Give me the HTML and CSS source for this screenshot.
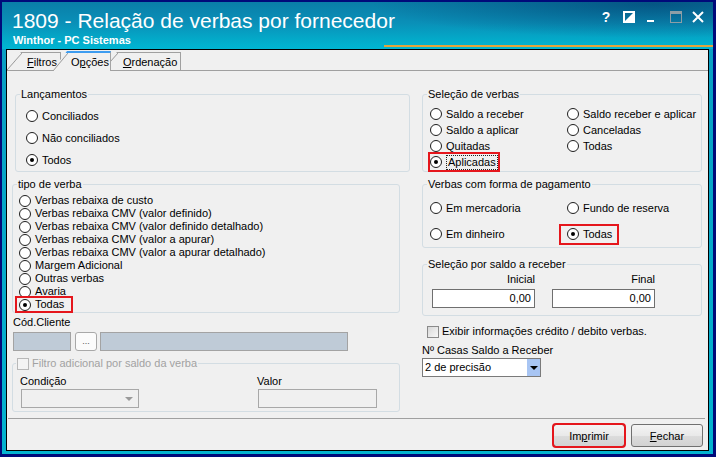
FILE: index.html
```html
<!DOCTYPE html>
<html lang="pt-BR">
<head>
    <meta charset="UTF-8">
    <title>1809 - Relação de verbas por fornecedor</title>
    <link rel="stylesheet" href="styles.css">
</head>
<body>
    <div class="window">
        <div class="titlebar">
            <div class="title-row">
                <div class="title">1809 - Relação de verbas por fornecedor</div>
                <div class="controls">
                    <span class="ctl ctl-help">?</span>
                    <svg class="ctl ctl-restore" width="12" height="12" viewBox="0 0 12 12">
                        <path d="M1 1h10v10H1z" fill="none" stroke="#fff" stroke-width="2"/>
                        <path d="M11 1v10H1z" fill="#fff"/>
                    </svg>
                    <svg class="ctl ctl-min" width="12" height="12" viewBox="0 0 12 12">
                        <rect x="2" y="9" width="7" height="2" fill="#fff"/>
                    </svg>
                    <svg class="ctl ctl-max" width="12" height="12" viewBox="0 0 12 12">
                        <rect x="0.5" y="0.5" width="11" height="11" fill="none" stroke="#8d9ea6"/>
                        <rect x="0" y="0" width="12" height="3" fill="#8d9ea6"/>
                    </svg>
                    <svg class="ctl ctl-close" width="12" height="12" viewBox="0 0 12 12">
                        <path d="M1 1L11 11M11 1L1 11" stroke="#fff" stroke-width="2"/>
                    </svg>
                </div>
            </div>
            <div class="subtitle">Winthor - PC Sistemas</div>
        </div>

        <div class="client">
            <div class="tabs">
                <div class="tab"><u>F</u>iltros</div>
                <div class="tab active">O<u>p</u>ções</div>
                <div class="tab"><u>O</u>rdenação</div>
            </div>

            <div class="page">
                <div class="col col-left">
                    <fieldset class="grp grp-lanc">
                        <legend>Lançamentos</legend>
                        <div class="grp-body">
                            <div class="opt"><span class="radio"></span>Conciliados</div>
                            <div class="opt"><span class="radio"></span>Não conciliados</div>
                            <div class="opt"><span class="radio on"></span>Todos</div>
                        </div>
                    </fieldset>

                    <fieldset class="grp grp-tipo">
                        <legend>tipo de verba</legend>
                        <div class="grp-body">
                            <div class="opt"><span class="radio"></span>Verbas rebaixa de custo</div>
                            <div class="opt"><span class="radio"></span>Verbas rebaixa CMV (valor definido)</div>
                            <div class="opt"><span class="radio"></span>Verbas rebaixa CMV (valor definido detalhado)</div>
                            <div class="opt"><span class="radio"></span>Verbas rebaixa CMV (valor a apurar)</div>
                            <div class="opt"><span class="radio"></span>Verbas rebaixa CMV (valor a apurar detalhado)</div>
                            <div class="opt"><span class="radio"></span>Margem Adicional</div>
                            <div class="opt"><span class="radio"></span>Outras verbas</div>
                            <div class="opt"><span class="radio"></span>Avaria</div>
                            <div class="opt"><span class="mark mark-tipo"><span class="radio on"></span>Todas</span></div>
                        </div>
                    </fieldset>

                    <div class="cli-label">Cód.Cliente</div>
                    <div class="cli-row">
                        <span class="field-off cli-code"></span>
                        <span class="dots-btn">...</span>
                        <span class="field-off cli-name"></span>
                    </div>

                    <fieldset class="grp grp-filtro">
                        <legend class="legend-check"><span class="check off"></span>Filtro adicional por saldo da verba</legend>
                        <div class="grp-body filtro-row">
                            <div class="filtro-col filtro-cond">
                                <span>Condição</span>
                                <span class="combo-off"></span>
                            </div>
                            <div class="filtro-col">
                                <span>Valor</span>
                                <span class="input-off"></span>
                            </div>
                        </div>
                    </fieldset>
                </div>

                <div class="col col-right">
                    <fieldset class="grp grp-sel">
                        <legend>Seleção de verbas</legend>
                        <div class="grp-body opt-grid">
                            <div class="opt"><span class="radio"></span>Saldo a receber</div>
                            <div class="opt"><span class="radio"></span>Saldo receber e aplicar</div>
                            <div class="opt"><span class="radio"></span>Saldo a aplicar</div>
                            <div class="opt"><span class="radio"></span>Canceladas</div>
                            <div class="opt"><span class="radio"></span>Quitadas</div>
                            <div class="opt"><span class="radio"></span>Todas</div>
                            <div class="opt"><span class="mark mark-apl"><span class="radio on"></span><span class="focus">Aplicadas</span></span></div>
                        </div>
                    </fieldset>

                    <fieldset class="grp grp-pag">
                        <legend>Verbas com forma de pagamento</legend>
                        <div class="grp-body opt-grid">
                            <div class="opt"><span class="radio"></span>Em mercadoria</div>
                            <div class="opt"><span class="radio"></span>Fundo de reserva</div>
                            <div class="opt"><span class="radio"></span>Em dinheiro</div>
                            <div class="opt"><span class="mark mark-pag"><span class="radio on"></span>Todas</span></div>
                        </div>
                    </fieldset>

                    <fieldset class="grp grp-saldo">
                        <legend>Seleção por saldo a receber</legend>
                        <div class="grp-body saldo-grid">
                            <span class="saldo-label">Inicial</span>
                            <span class="saldo-label">Final</span>
                            <span class="num">0,00</span>
                            <span class="num">0,00</span>
                        </div>
                    </fieldset>

                    <div class="check-row"><span class="check"></span>Exibir informações crédito / debito verbas.</div>

                    <div class="casas-label">Nº Casas Saldo a Receber</div>
                    <div class="combo">
                        <span class="combo-text">2 de precisão</span>
                        <span class="drop"></span>
                    </div>
                </div>
            </div>

            <div class="footer">
                <button class="btn mark-btn">Im<u>p</u>rimir</button>
                <button class="btn"><u>F</u>echar</button>
            </div>
        </div>
    </div>
</body>
</html>
```

FILE: styles.css
```css
* {
    box-sizing: border-box;
}

html, body {
    margin: 0;
    padding: 0;
}

body {
    font-family: "Liberation Sans", Arial, sans-serif;
    font-size: 11px;
    line-height: 13px;
    color: #000000;
    background: #03a4c4;
}

.window {
    width: 716px;
    height: 457px;
    display: flex;
    flex-direction: column;
    border-style: solid;
    border-color: #000a7a;
    border-width: 2px 3px 3px 2px;
    padding: 0 4px 3px 4px;
    background: linear-gradient(180deg, #0a9cc2, #03b3d0);
}

/* title bar */
.titlebar {
    position: relative;
    height: 47px;
    flex: none;
    margin: 0 -4px;
    padding: 7px 9px 0 10px;
    color: #ffffff;
    background:
        radial-gradient(ellipse 280px 34px at 650px 2px, rgba(0, 45, 95, 0.5), rgba(0, 45, 95, 0)),
        linear-gradient(180deg, #0a7ea8 0%, #0a90b8 45%, #03aac9 80%, #00b6d3 100%);
}

.titlebar::after {
    content: "";
    position: absolute;
    left: 382px;
    right: 0;
    bottom: 2px;
    height: 2px;
    background: #e2a43c;
}

.title-row {
    display: flex;
    justify-content: space-between;
    align-items: flex-start;
}

.title {
    font-size: 21px;
    line-height: 24px;
}

.controls {
    display: flex;
    align-items: center;
    margin-top: 2px;
}

.ctl {
    display: block;
    width: 12px;
    height: 12px;
}

.ctl-help {
    font-weight: bold;
    font-size: 14px;
    line-height: 12px;
    text-align: center;
}

.ctl-restore {
    margin-left: 11px;
}

.ctl-min {
    margin-left: 10px;
}

.ctl-max {
    margin-left: 13px;
}

.ctl-close {
    margin-left: 10px;
}

.subtitle {
    margin-top: 1px;
    padding-left: 1px;
    font-weight: bold;
}

/* client area */
.client {
    flex: 1;
    display: flex;
    flex-direction: column;
    border: 1px solid #000000;
    background: #f0f0f0;
}

.tabs {
    position: relative;
    z-index: 1;
    display: flex;
    align-items: flex-end;
    height: 20px;
    flex: none;
}

.tab {
    position: relative;
    height: 18px;
    padding: 3px 3px 0 20px;
    margin-right: -8px;
    border-top: 1px solid #a0a0a0;
    border-right: 1px solid #a0a0a0;
    background:
        linear-gradient(to bottom right, transparent calc(50% - 0.8px), #9c9c9c 50%, transparent calc(50% + 0.8px)) no-repeat 0 0 / 15px 100%,
        #f0f0f0;
    clip-path: polygon(14px 0, 100% 0, 100% 100%, -1px 100%);
    white-space: nowrap;
}

.tab.active {
    z-index: 2;
    height: 20px;
    margin-bottom: -1px;
    padding: 3px 1px 0 18px;
    border-top: 2px solid #3d9cf0;
}

.page {
    display: flex;
    gap: 12px;
    height: 348px;
    flex: none;
    border-top: 1px solid #a0a0a0;
    padding: 17px 0 0 5px;
}

.col {
    display: flex;
    flex-direction: column;
    align-items: flex-start;
}

.col-left {
    width: 398px;
}

.col-right {
    width: 280px;
}

/* group boxes */
fieldset {
    margin: 0;
    padding: 0;
    min-width: 0;
    border: 1px solid #d3dde3;
    border-radius: 3px;
}

legend {
    margin-left: 4px;
    padding: 0 1px;
    line-height: 13px;
}

.opt {
    display: flex;
    align-items: center;
    gap: 4px;
    white-space: nowrap;
}

.radio {
    display: flex;
    align-items: center;
    justify-content: center;
    flex: none;
    width: 12px;
    height: 12px;
    border: 1px solid #1e1e1e;
    border-radius: 50%;
    background: #ffffff;
}

.radio.on::after {
    content: "";
    width: 4px;
    height: 4px;
    border-radius: 50%;
    background: #000000;
}

.mark {
    display: flex;
    align-items: center;
    gap: 4px;
    outline: 2px solid #e5161c;
}

.grp-lanc {
    width: 395px;
    margin-left: 3px;
}

.grp-lanc .grp-body {
    padding: 4px 0 0 10px;
}

.grp-lanc .opt {
    height: 22px;
}

.grp-tipo {
    width: 388px;
    margin-top: 6px;
}

.grp-tipo .grp-body {
    padding: 3px 0 1px 6px;
}

.grp-tipo .opt {
    height: 13px;
}

.mark-tipo {
    height: 13px;
    margin-left: -2px;
    padding: 0 7px 0 2px;
}

.cli-label {
    margin: 3px 0 0 1px;
}

.cli-row {
    display: flex;
    margin: 3px 0 0 1px;
}

.field-off {
    height: 19px;
    border: 1px solid #a3a3a3;
    background: #bfcbd7;
}

.cli-code {
    width: 58px;
}

.cli-name {
    width: 248px;
    margin-left: 3px;
}

.dots-btn {
    width: 22px;
    height: 19px;
    margin-left: 4px;
    border: 1px solid #a8a8a8;
    border-radius: 3px;
    background: #fbfbfb;
    color: #555555;
    font-size: 9px;
    line-height: 17px;
    text-align: center;
}

.grp-filtro {
    width: 388px;
    margin-top: 6px;
}

.grp-filtro .grp-body {
    padding: 5px 0 3px 7px;
}

.legend-check {
    display: flex;
    align-items: center;
    gap: 3px;
    margin-left: 3px;
    color: #a2a2a2;
}

.check {
    flex: none;
    width: 12px;
    height: 12px;
    border: 1px solid #8a8a8a;
    background: linear-gradient(135deg, #d8d8d8, #f8f8f8);
}

.check.off {
    border-color: #b8b8b8;
    background: #f4f4f4;
}

.filtro-row {
    display: flex;
}

.filtro-col {
    display: flex;
    flex-direction: column;
    gap: 1px;
}

.filtro-cond {
    width: 237px;
}

.combo-off {
    display: flex;
    align-items: center;
    justify-content: flex-end;
    width: 118px;
    height: 19px;
    margin-left: 1px;
    padding-right: 5px;
    border: 1px solid #a8a8a8;
    background: #f0f0f0;
}

.combo-off::after {
    content: "";
    border-left: 4px solid transparent;
    border-right: 4px solid transparent;
    border-top: 4px solid #9a9a9a;
}

.input-off {
    width: 119px;
    height: 19px;
    margin-left: 1px;
    border: 1px solid #a8a8a8;
    background: #f0f0f0;
}

/* right column */
.grp-sel,
.grp-pag,
.grp-saldo {
    width: 280px;
}

.opt-grid {
    display: grid;
    grid-template-columns: 137px 1fr;
}

.grp-sel .grp-body {
    grid-auto-rows: 16px;
    padding: 5px 0 1px 7px;
}

.grp-pag {
    margin-top: 6px;
}

.grp-pag .grp-body {
    grid-auto-rows: 26px;
    padding: 4px 0 0 7px;
}

.mark-apl {
    height: 16px;
}

.focus {
    padding: 0 1px;
    border: 1px dotted #222222;
    line-height: 13px;
}

.mark-pag {
    height: 17px;
    margin-left: -6px;
    padding: 0 5px 0 6px;
}

.grp-saldo {
    margin-top: 10px;
}

.saldo-grid {
    display: grid;
    grid-template-columns: 103px 103px;
    column-gap: 17px;
    row-gap: 3px;
    padding: 2px 0 7px 9px;
}

.saldo-label {
    text-align: right;
}

.num {
    height: 19px;
    padding-right: 3px;
    border: 1px solid #6f6f6f;
    background: #ffffff;
    line-height: 17px;
    text-align: right;
}

.check-row {
    display: flex;
    align-items: center;
    gap: 3px;
    height: 13px;
    margin: 9px 0 0 5px;
    white-space: nowrap;
}

.casas-label {
    margin-top: 6px;
}

.combo {
    display: flex;
    width: 119px;
    height: 19px;
    margin-top: 1px;
    border: 1px solid #7a7a7a;
    background: #ffffff;
}

.combo-text {
    flex: 1;
    padding-left: 2px;
    line-height: 17px;
}

.drop {
    display: flex;
    align-items: center;
    justify-content: center;
    width: 13px;
    background: #a8c5f3;
}

.drop::after {
    content: "";
    border-left: 4px solid transparent;
    border-right: 4px solid transparent;
    border-top: 4px solid #000000;
}

/* buttons */
.footer {
    display: flex;
    justify-content: flex-end;
    gap: 6px;
    flex: 1;
    margin: 0 3px 0 1px;
    padding: 5px 2px 0 0;
    border-top: 1px solid #a0a0a0;
}

.btn {
    width: 72px;
    height: 23px;
    padding: 0;
    border: 1px solid #707070;
    border-radius: 3px;
    background: linear-gradient(180deg, #f4f4f4, #e9e9e9 50%, #dcdcdc 51%, #d2d2d2);
    font-family: inherit;
    font-size: 11px;
    color: #000000;
}

.mark-btn {
    outline: 2px solid #e5161c;
    outline-offset: -1px;
}
```
